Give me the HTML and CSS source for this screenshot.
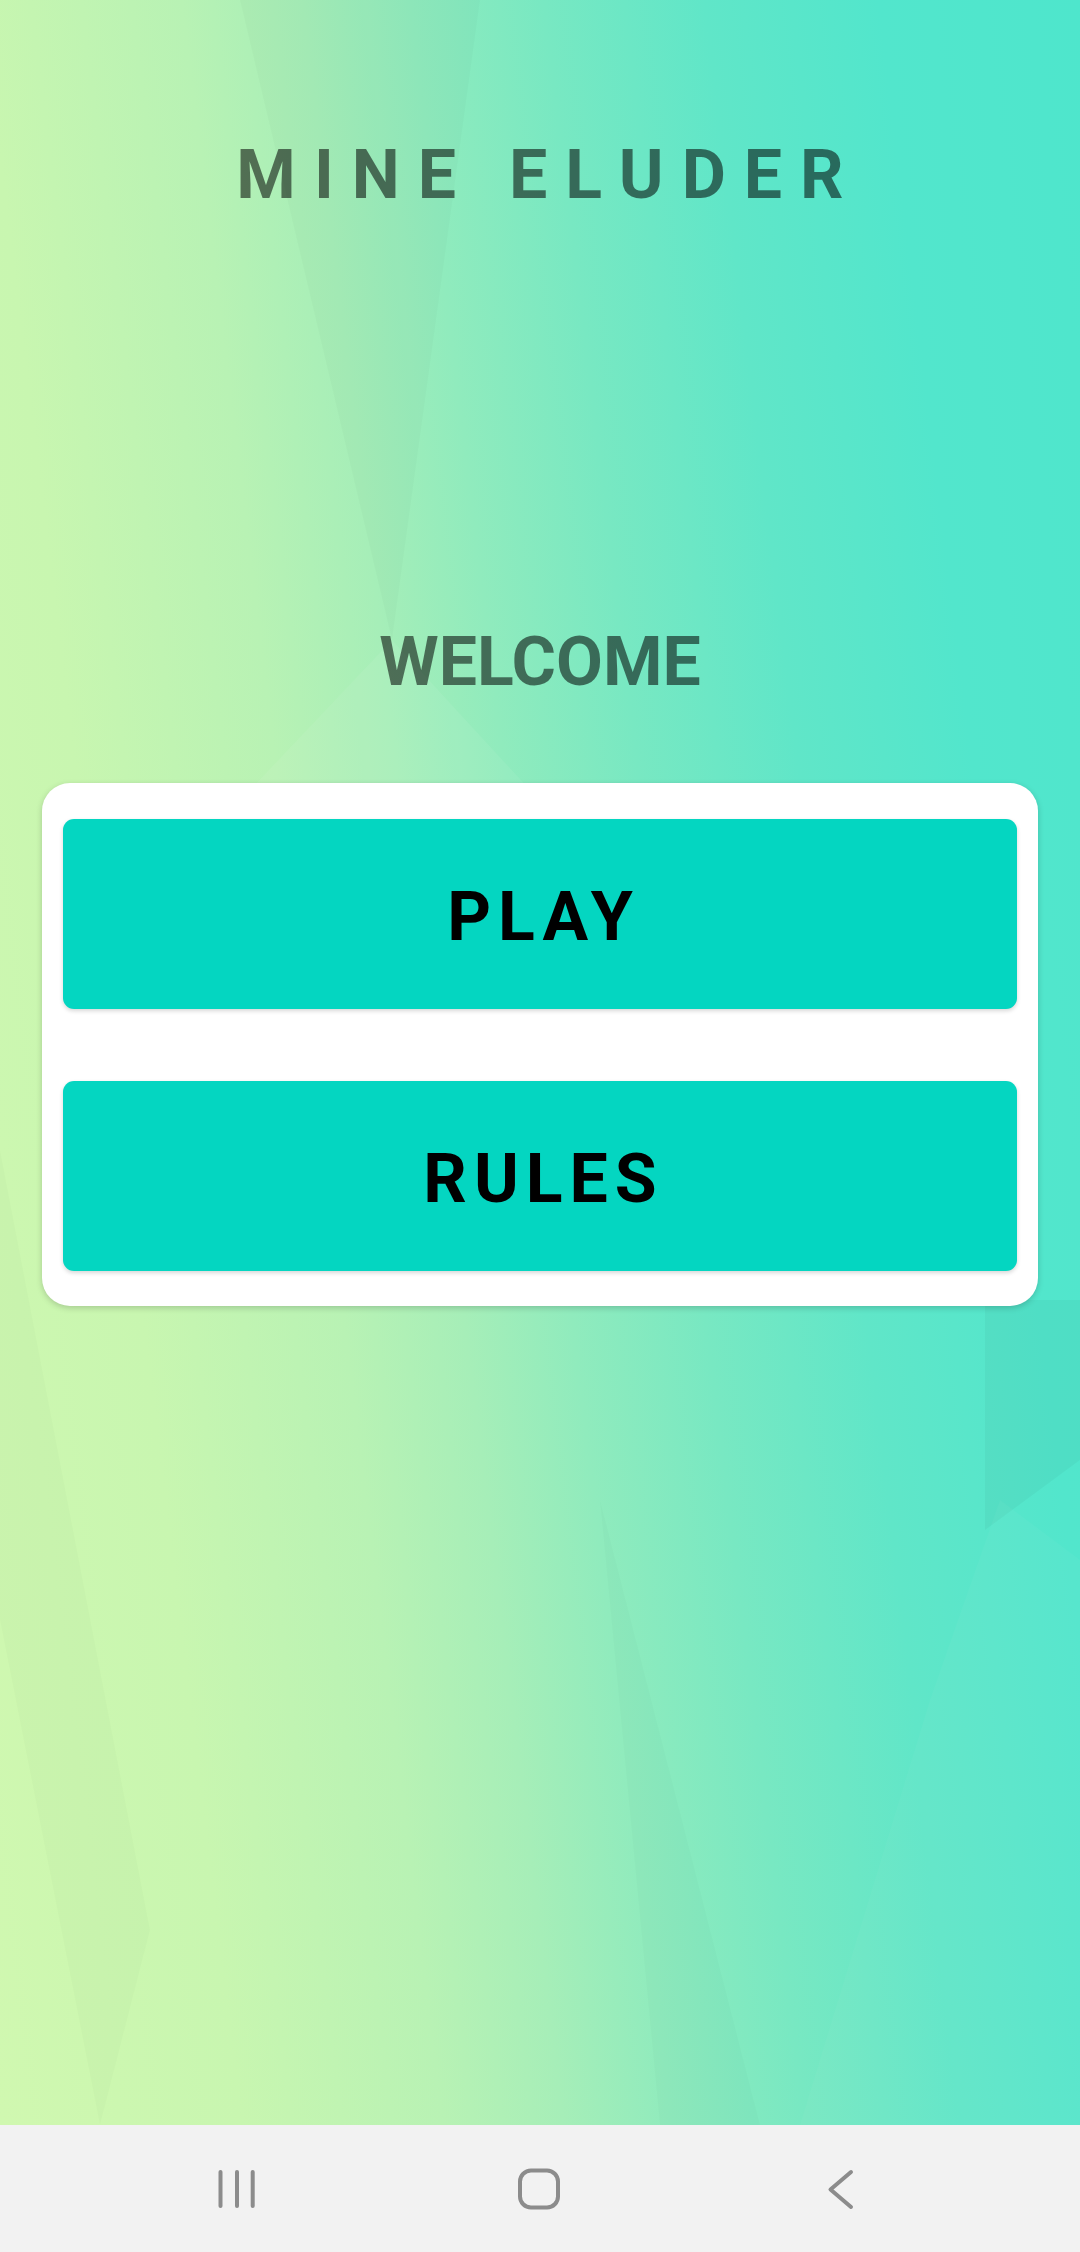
FILE: index.html
```html
<!DOCTYPE html>
<html lang="en">
<head>
<meta charset="utf-8">
<title>Mine Eluder</title>
<link rel="stylesheet" href="styles.css">
</head>
<body>
<div class="screen">
  <main class="app">
    <svg class="facets" viewBox="0 0 1080 2125" preserveAspectRatio="none" aria-hidden="true">
      <polygon points="240,0 480,0 392,640" fill="#000" fill-opacity="0.018"/>
      <polygon points="392,640 250,790 530,790" fill="#fff" fill-opacity="0.06"/>
      <polygon points="985,1300 1080,1300 1080,1460 985,1530" fill="#000" fill-opacity="0.03"/>
      <polygon points="0,1150 150,1930 100,2125 0,1620" fill="#000" fill-opacity="0.015"/>
      <polygon points="600,1500 760,2125 660,2125" fill="#000" fill-opacity="0.015"/>
      <polygon points="930,1700 1000,1500 1080,1560 1080,2125 800,2125" fill="#fff" fill-opacity="0.03"/>
    </svg>
    <h1 class="title">MINE ELUDER</h1>
    <h2 class="welcome">WELCOME</h2>
    <section class="card">
      <button class="btn" type="button">PLAY</button>
      <button class="btn" type="button">RULES</button>
    </section>
  </main>
  <nav class="navbar">
    <div class="nav-item">
      <svg width="40" height="44" viewBox="0 0 40 44" aria-hidden="true">
        <g stroke="#8c8c8c" stroke-width="4" stroke-linecap="round">
          <line x1="3.5" y1="5" x2="3.5" y2="39"/>
          <line x1="20" y1="5" x2="20" y2="39"/>
          <line x1="35.7" y1="5" x2="35.7" y2="39"/>
        </g>
      </svg>
    </div>
    <div class="nav-item">
      <svg width="46" height="46" viewBox="0 0 46 46" aria-hidden="true">
        <rect x="4" y="4.5" width="38" height="37" rx="11" fill="none" stroke="#8c8c8c" stroke-width="4"/>
      </svg>
    </div>
    <div class="nav-item">
      <svg width="30" height="44" viewBox="0 0 30 44" aria-hidden="true">
        <polyline points="25,5 4.5,22.5 25,40" fill="none" stroke="#8c8c8c" stroke-width="4" stroke-linecap="round" stroke-linejoin="round"/>
      </svg>
    </div>
  </nav>
</div>
</body>
</html>
```

FILE: styles.css
```css
* {
  box-sizing: border-box;
}

html, body {
  margin: 0;
  padding: 0;
}

body {
  font-family: Roboto, "Noto Sans", "Liberation Sans", sans-serif;
  width: 1080px;
  height: 2252px;
  overflow: hidden;
}

.screen {
  display: flex;
  flex-direction: column;
  width: 1080px;
  height: 2252px;
}

.app {
  position: relative;
  flex: 0 0 2125px;
  height: 2125px;
  display: flex;
  flex-direction: column;
  align-items: center;
  padding-top: 135px;
  background: linear-gradient(83deg,
    #d0f8b0 0%,
    #c8f6b0 18%,
    #b8f2b4 33%,
    #a6eeb8 42%,
    #90ebbd 50%,
    #78e8c2 60%,
    #60e6c8 72%,
    #52e6cc 85%,
    #4ee6cc 100%);
  overflow: hidden;
}

.facets {
  position: absolute;
  left: 0;
  top: 0;
  width: 1080px;
  height: 2125px;
  pointer-events: none;
}

.title {
  position: relative;
  margin: 0;
  font-size: 68px;
  line-height: 80px;
  font-weight: 700;
  letter-spacing: 18px;
  padding-left: 18px;
  color: rgba(0, 0, 0, 0.54);
}

.welcome {
  position: relative;
  margin: 407px 0 0 0;
  font-size: 68px;
  line-height: 80px;
  font-weight: 700;
  color: rgba(0, 0, 0, 0.54);
}

.card {
  position: relative;
  margin-top: 81px;
  width: 996px;
  background: #fff;
  border-radius: 28px;
  padding: 36px 21px 35px 21px;
  display: flex;
  flex-direction: column;
  gap: 72px;
  box-shadow: 0 2px 6px rgba(0, 0, 0, 0.18);
}

.btn {
  display: flex;
  align-items: center;
  justify-content: center;
  height: 190px;
  width: 100%;
  border: none;
  border-radius: 11px;
  background: #04d6c1;
  color: #000;
  font-family: Roboto, "Noto Sans", "Liberation Sans", sans-serif;
  font-size: 68px;
  font-weight: 700;
  letter-spacing: 7px;
  padding: 6px 0 0 7px;
  box-shadow: 0 2px 4px rgba(0, 0, 0, 0.16);
}

.navbar {
  flex: 0 0 127px;
  height: 127px;
  background: #f2f2f2;
  display: flex;
  justify-content: center;
  align-items: center;
  padding-right: 2px;
}

.nav-item {
  width: 302px;
  display: flex;
  justify-content: center;
  align-items: center;
}
```
